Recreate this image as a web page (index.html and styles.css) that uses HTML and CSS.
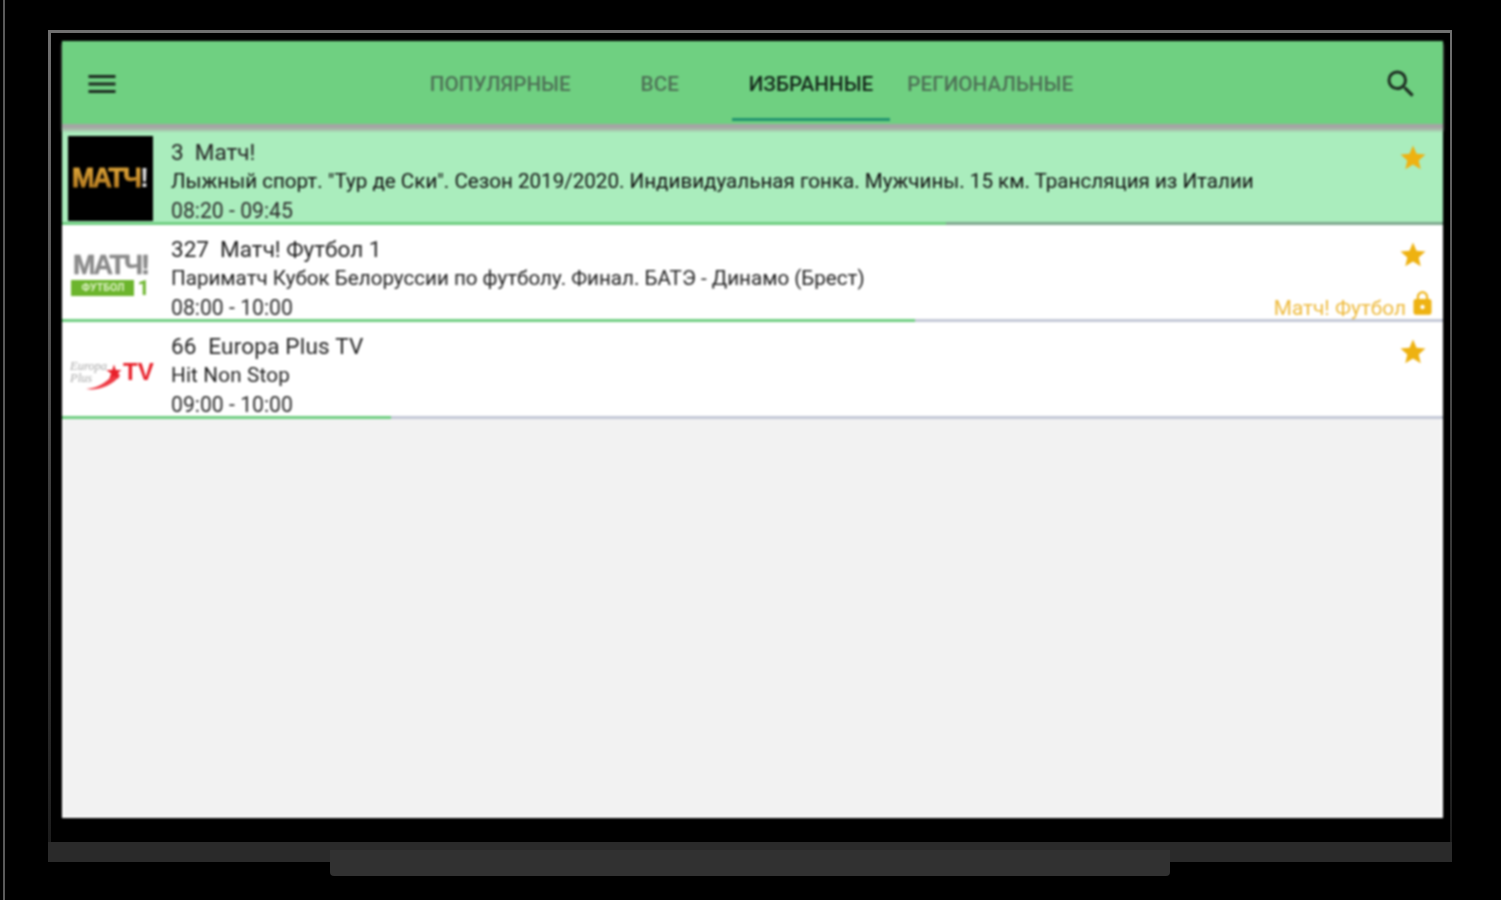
FILE: index.html
```html
<html>
  <head>
    <meta charset="utf-8">
    <link rel="stylesheet" href="styles.css">
  </head>
  <body>
    <div id="frame">
      <div id="screen">
        <div id="toolbar">
          <svg class="tool-icon" viewBox="0 0 24 24"><path d="M3 18h18v-2H3v2zm0-5h18v-2H3v2zm0-7v2h18V6H3z"/></svg>
          <div id="tabs">
            <div class="tab">ПОПУЛЯРНЫЕ</div>
            <div class="tab">ВСЕ</div>
            <div class="tab active">ИЗБРАННЫЕ</div>
            <div class="tab">РЕГИОНАЛЬНЫЕ</div>
          </div>
          <svg class="tool-icon" viewBox="0 0 24 24"><path d="M15.5 14h-.79l-.28-.27A6.471 6.471 0 0 0 16 9.5 6.5 6.5 0 1 0 9.5 16c1.61 0 3.09-.59 4.23-1.57l.27.28v.79l5 4.99L20.49 19l-4.99-5zm-6 0C7.01 14 5 11.99 5 9.5S7.01 5 9.5 5 14 7.01 14 9.5 11.99 14 9.5 14z"/></svg>
        </div>

        <div class="row current">
          <div class="row-main">
            <div class="logo logo-match">
              <span class="match-gold">МАТЧ</span><span class="match-mark">!</span>
            </div>
            <div class="info">
              <div class="title">3&nbsp; Матч!</div>
              <div class="desc">Лыжный спорт. "Тур де Ски". Сезон 2019/2020. Индивидуальная гонка. Мужчины. 15 км. Трансляция из Италии</div>
              <div class="time">08:20 - 09:45</div>
            </div>
            <div class="side">
              <svg class="star" viewBox="0 0 24 24"><path d="M12 17.27L18.18 21l-1.64-7.03L22 9.24l-7.19-.61L12 2 9.19 8.63 2 9.24l5.46 4.73L5.82 21z"/></svg>
            </div>
          </div>
          <div class="track"><div class="fill" style="width: 64%"></div></div>
        </div>

        <div class="row">
          <div class="row-main">
            <div class="logo logo-football">
              <span class="match-grey">МАТЧ!</span>
              <div class="football-line"><span class="football-box">ФУТБОЛ</span><span class="football-num">1</span></div>
            </div>
            <div class="info">
              <div class="title">327&nbsp; Матч! Футбол 1</div>
              <div class="desc">Париматч Кубок Белоруссии по футболу. Финал. БАТЭ - Динамо (Брест)</div>
              <div class="time">08:00 - 10:00</div>
            </div>
            <div class="side">
              <svg class="star" viewBox="0 0 24 24"><path d="M12 17.27L18.18 21l-1.64-7.03L22 9.24l-7.19-.61L12 2 9.19 8.63 2 9.24l5.46 4.73L5.82 21z"/></svg>
              <div class="package">
                <span>Матч! Футбол</span>
                <svg class="lock" viewBox="0 0 24 24"><path d="M18 8h-1V6c0-2.76-2.24-5-5-5S7 3.24 7 6v2H6c-1.1 0-2 .9-2 2v10c0 1.1.9 2 2 2h12c1.1 0 2-.9 2-2V10c0-1.1-.9-2-2-2zm-6 9c-1.1 0-2-.9-2-2s.9-2 2-2 2 .9 2 2-.9 2-2 2zm3.1-9H8.9V6c0-1.71 1.39-3.1 3.1-3.1 1.71 0 3.1 1.39 3.1 3.1v2z"/></svg>
              </div>
            </div>
          </div>
          <div class="track"><div class="fill" style="width: 61.8%"></div></div>
        </div>

        <div class="row">
          <div class="row-main">
            <div class="logo logo-europa">
              <svg class="europa-swoosh" viewBox="0 0 85 85"><path d="M18 59 C31 58 41 51 49 40 L52 46 C44 55 31 61 18 59z"/></svg>
              <span class="europa-name">Europa<br>Plus</span>
              <span class="europa-star">★</span>
              <span class="europa-tv">TV</span>
            </div>
            <div class="info">
              <div class="title latin">66&nbsp; Europa Plus TV</div>
              <div class="desc latin">Hit Non Stop</div>
              <div class="time">09:00 - 10:00</div>
            </div>
            <div class="side">
              <svg class="star" viewBox="0 0 24 24"><path d="M12 17.27L18.18 21l-1.64-7.03L22 9.24l-7.19-.61L12 2 9.19 8.63 2 9.24l5.46 4.73L5.82 21z"/></svg>
            </div>
          </div>
          <div class="track"><div class="fill" style="width: 23.8%"></div></div>
        </div>

        <div id="empty"></div>
      </div>
    </div>
    <div id="base">
      <div id="stand"></div>
    </div>
  </body>
</html>
```

FILE: styles.css
```css
html {
  background: #000;
}
body {
  font-family: Roboto, "Liberation Sans", sans-serif;
  margin: 0 0 0 3px;
  height: 870px;
  padding: 30px 0 0 43px;
  background: #000;
  border-left: 2px solid #5a5a5a;
  overflow: hidden;
}
#frame {
  box-sizing: border-box;
  width: 1404px;
  height: 812px;
  padding: 8px 7px 0 11px;
  border-style: solid;
  border-width: 3px 2px 0 3px;
  border-image: linear-gradient(#707070, #3c3c3c 60%, #1c1c1c) 1;
}
#screen {
  display: flex;
  flex-direction: column;
  width: 1381px;
  height: 777px;
  background: #f2f2f2;
  filter: blur(0.8px);
}
#base {
  display: flex;
  justify-content: center;
  align-items: flex-start;
  width: 1404px;
  height: 12px;
  padding-top: 8px;
  background: #2a2a2a;
}
#stand {
  flex: none;
  width: 840px;
  height: 26px;
  background: #313131;
  border-radius: 0 0 4px 4px;
}

#toolbar {
  position: relative;
  z-index: 1;
  display: flex;
  flex: none;
  justify-content: space-between;
  align-items: center;
  box-sizing: border-box;
  height: 87px;
  padding: 3px 24px 0 22px;
  background: #6fd081;
  border-bottom: 4px solid #a4a6a4;
  box-shadow: 0 3px 2px #a6b8a8;
}
.tool-icon {
  width: 36px;
  height: 36px;
  fill: #1c2a20;
}
#tabs {
  display: flex;
  align-self: stretch;
  margin: -3px 0 3px;
}
.tab {
  display: flex;
  justify-content: center;
  align-items: center;
  box-sizing: border-box;
  min-width: 144px;
  padding: 9px 17px 0;
  font-size: 20.7px;
  font-weight: 500;
  color: #4d6f55;
  border-bottom: 3px solid transparent;
}
.tab.active {
  color: #14261a;
  border-bottom-color: #21936f;
}

.row {
  display: flex;
  flex-direction: column;
  flex: none;
  height: 97px;
  background: #fff;
}
.row.current {
  background: #aaedbd;
}
.row-main {
  display: flex;
  flex: 1;
  min-height: 0;
}
.track {
  flex: none;
  height: 3px;
  background: #c3c8d6;
}
.current .track {
  background: #7ea88e;
}
.fill {
  height: 100%;
  background: #6fce81;
}

.logo {
  position: relative;
  flex: none;
  box-sizing: border-box;
  width: 85px;
  height: 85px;
  margin: 8px 18px 0 6px;
}
.logo-match {
  display: flex;
  justify-content: center;
  align-items: center;
  background: #000;
  white-space: nowrap;
}
.match-gold {
  font-family: "Liberation Sans", sans-serif;
  font-size: 27px;
  font-weight: 700;
  letter-spacing: -2px;
  background: linear-gradient(#e8b040, #a86c18);
  -webkit-background-clip: text;
  -webkit-text-stroke: 0.5px #c08a28;
  color: transparent;
}
.match-mark {
  font-family: "Liberation Sans", sans-serif;
  font-size: 27px;
  font-weight: 700;
  color: #ddd;
}
.logo-football {
  display: flex;
  flex-direction: column;
  align-items: center;
  justify-content: center;
  padding-bottom: 4px;
}
.match-grey {
  font-family: "Liberation Sans", sans-serif;
  font-size: 27px;
  line-height: 27px;
  font-weight: 700;
  letter-spacing: -2px;
  -webkit-text-stroke: 0.5px #8a8a8a;
  color: #8a8a8a;
}
.football-line {
  display: flex;
  align-items: center;
  gap: 3px;
  margin-top: 1px;
}
.football-box {
  width: 63px;
  height: 16px;
  font-size: 10.5px;
  line-height: 16px;
  font-weight: 700;
  text-align: center;
  color: #dff2c8;
  background: #6cb52d;
}
.football-num {
  font-size: 21px;
  line-height: 16px;
  font-weight: 700;
  color: #6cb52d;
}
.logo-europa {
  display: flex;
  align-items: center;
  padding-bottom: 2px;
  white-space: nowrap;
}
.europa-swoosh {
  position: absolute;
  top: 0;
  left: 0;
  width: 85px;
  height: 85px;
  fill: #ee3a44;
}
.europa-name {
  position: relative;
  box-sizing: border-box;
  width: 37px;
  padding-left: 2px;
  font-family: "Liberation Serif", serif;
  font-size: 12.5px;
  line-height: 12px;
  font-style: italic;
  color: #a8a8a8;
}
.europa-star {
  position: relative;
  font-size: 20px;
  color: #e8202a;
}
.europa-tv {
  font-family: "Liberation Sans", sans-serif;
  font-size: 24px;
  font-weight: 700;
  color: #e8202a;
}

.info {
  flex: 1;
  min-width: 0;
  padding-top: 10px;
  white-space: nowrap;
}
.title {
  height: 29px;
  font-size: 22.5px;
  line-height: 29px;
  color: #222;
}
.desc {
  height: 29px;
  font-size: 20.6px;
  line-height: 29px;
  color: #222;
}
.current .desc {
  color: #111;
}
.latin {
  letter-spacing: 0.2px;
}
.time {
  height: 29px;
  font-size: 21.2px;
  line-height: 29px;
  color: #2b2b2b;
}

.side {
  display: flex;
  flex: none;
  flex-direction: column;
  justify-content: space-between;
  align-items: flex-end;
  padding: 15px 10px 1px 0;
}
.star {
  width: 30px;
  height: 30px;
  margin-right: 5px;
  fill: #eeb211;
}
.package {
  display: flex;
  align-items: flex-end;
  gap: 3px;
  margin-bottom: -2px;
  font-size: 20.8px;
  color: #eeba3c;
  white-space: nowrap;
}
.lock {
  width: 27px;
  height: 27px;
  margin: 0 -3px 3px 0;
  fill: #eeb211;
}

#empty {
  flex: 1;
  box-shadow: inset 2px -2px 0 #fff, inset -2px 0 0 #fff;
}
```
